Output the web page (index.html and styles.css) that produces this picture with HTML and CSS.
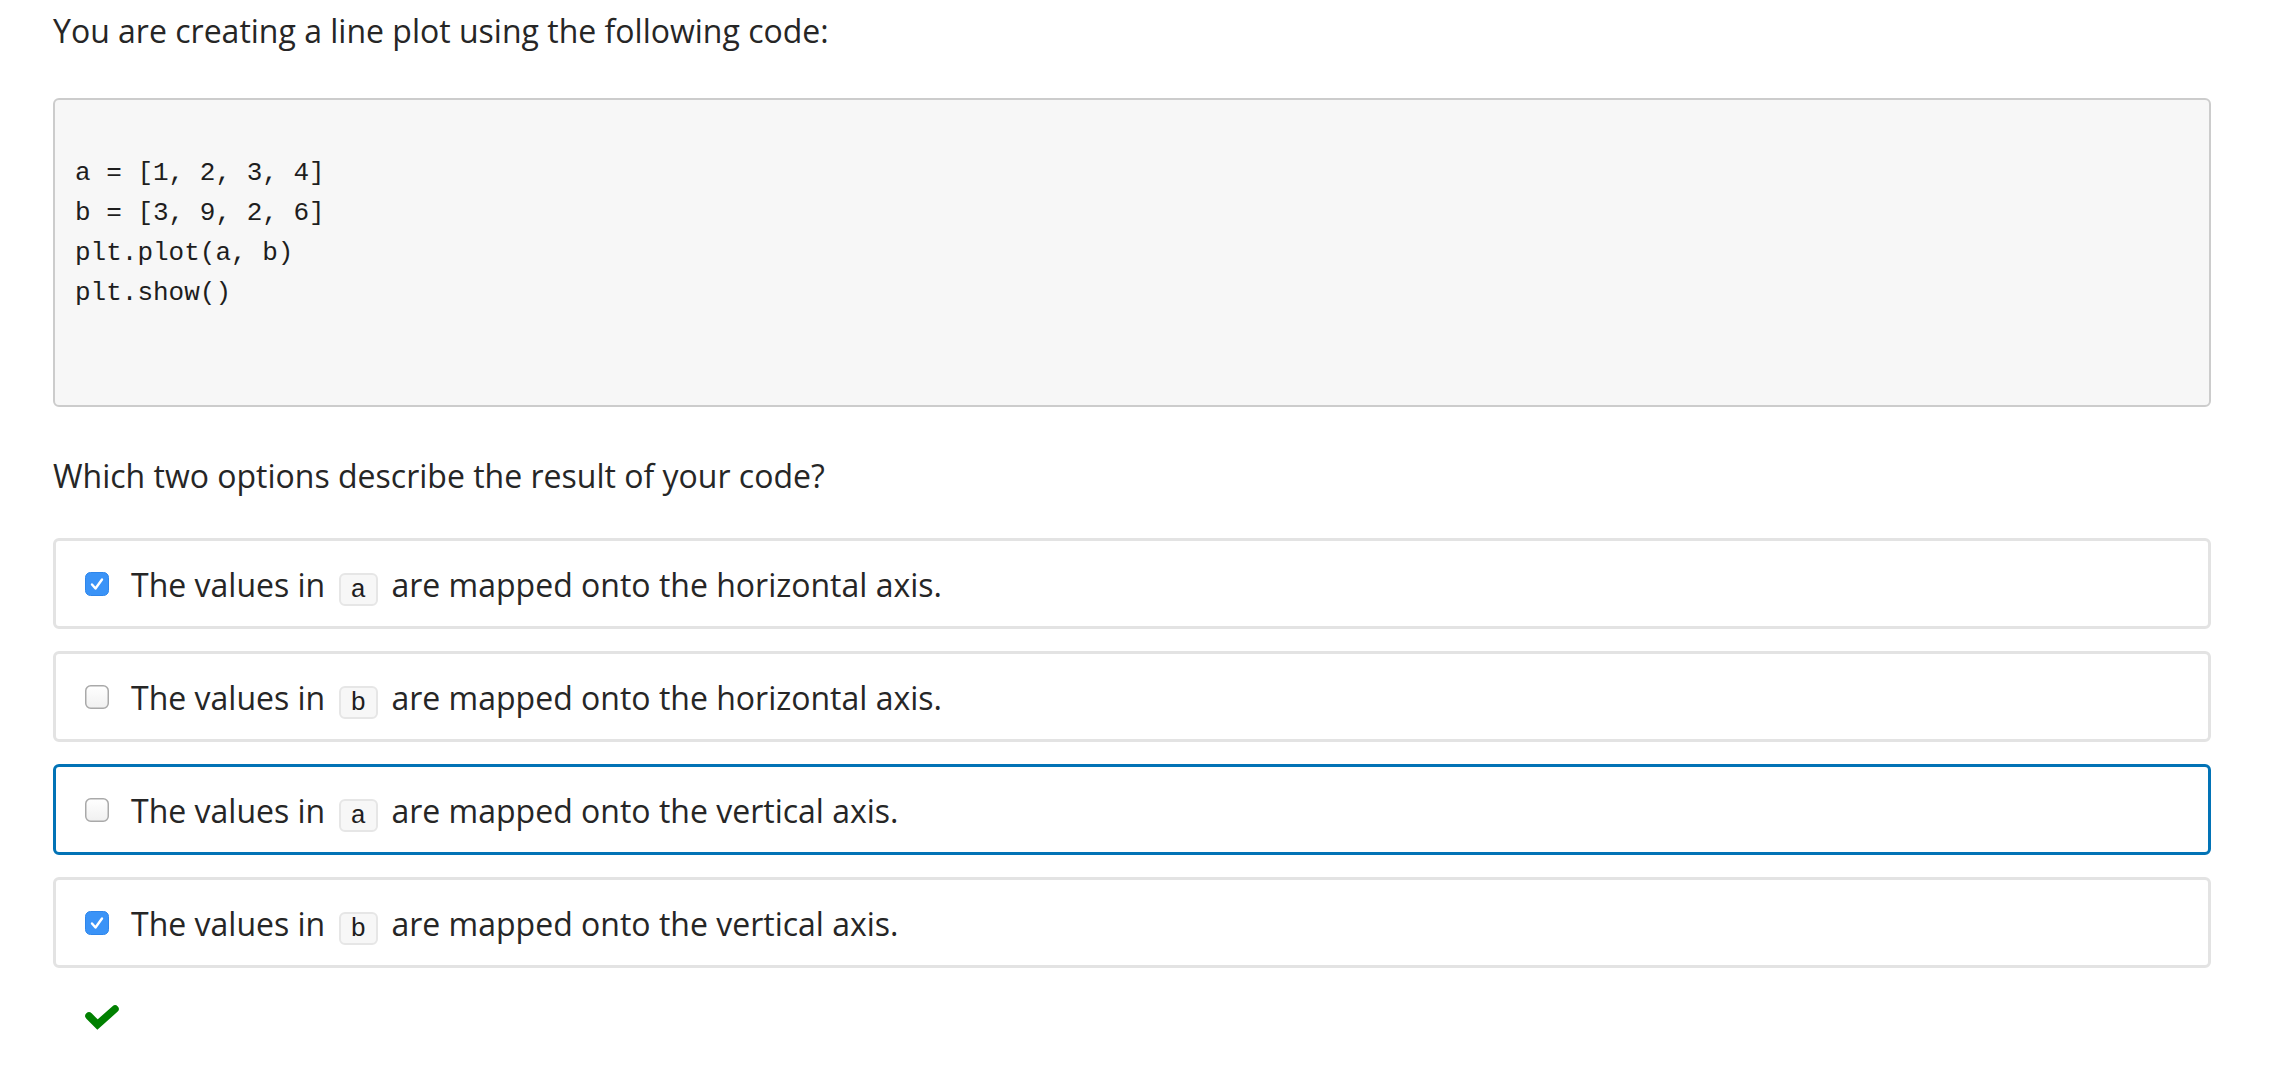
FILE: index.html
```html
<!DOCTYPE html>
<html>
<head>
<meta charset="utf-8">
<link rel="stylesheet" href="styles.css">
</head>
<body>
<div class="page">
  <p class="prompt">You are creating a line plot using the following code:</p>
  <pre class="code">a = [1, 2, 3, 4]
b = [3, 9, 2, 6]
plt.plot(a, b)
plt.show()</pre>
  <p class="question">Which two options describe the result of your code?</p>
  <div class="options">
    <label class="option">
      <svg class="cb" width="24" height="24" viewBox="0 0 24 24"><rect x="0.5" y="0.5" width="23" height="23" rx="5" fill="#3a93f7" stroke="#2f86ea"/><path d="M7 12.5 L10.5 16.5 L17 7.5" fill="none" stroke="#fff" stroke-width="2.4" stroke-linecap="round" stroke-linejoin="round"/></svg>
      <span class="txt">The values in <code class="inl">a</code> are mapped onto the horizontal axis.</span>
    </label>
    <label class="option">
      <svg class="cb" width="24" height="24" viewBox="0 0 24 24"><defs><linearGradient id="g1" x1="0" y1="0" x2="0" y2="1"><stop offset="0" stop-color="#ffffff"/><stop offset="1" stop-color="#f0f0f0"/></linearGradient></defs><rect x="0.75" y="0.75" width="22.5" height="22.5" rx="5" fill="url(#g1)" stroke="#a9a9a9" stroke-width="1.5"/></svg>
      <span class="txt">The values in <code class="inl">b</code> are mapped onto the horizontal axis.</span>
    </label>
    <label class="option focused">
      <svg class="cb" width="24" height="24" viewBox="0 0 24 24"><defs><linearGradient id="g2" x1="0" y1="0" x2="0" y2="1"><stop offset="0" stop-color="#ffffff"/><stop offset="1" stop-color="#f0f0f0"/></linearGradient></defs><rect x="0.75" y="0.75" width="22.5" height="22.5" rx="5" fill="url(#g2)" stroke="#a9a9a9" stroke-width="1.5"/></svg>
      <span class="txt">The values in <code class="inl">a</code> are mapped onto the vertical axis.</span>
    </label>
    <label class="option">
      <svg class="cb" width="24" height="24" viewBox="0 0 24 24"><rect x="0.5" y="0.5" width="23" height="23" rx="5" fill="#3a93f7" stroke="#2f86ea"/><path d="M7 12.5 L10.5 16.5 L17 7.5" fill="none" stroke="#fff" stroke-width="2.4" stroke-linecap="round" stroke-linejoin="round"/></svg>
      <span class="txt">The values in <code class="inl">b</code> are mapped onto the vertical axis.</span>
    </label>
  </div>
  <div class="result">
    <svg width="36" height="28" viewBox="0 0 36 28"><path d="M5 11 L13.5 19.5 L31 4" fill="none" stroke="#008000" stroke-width="7.5" stroke-linecap="round" stroke-linejoin="miter"/></svg>
  </div>
</div>
</body>
</html>
```

FILE: styles.css
```css
html, body {
  margin: 0;
  padding: 0;
  background: #ffffff;
}

.page {
  width: 2158px;
  padding-left: 53px;
  font-family: "Open Sans", "Noto Sans", sans-serif;
  color: #262626;
}

.prompt {
  margin: 0;
  padding-top: 9px;
  font-size: 32px;
  line-height: 44px;
}

.code {
  margin: 45px 0 0 0;
  box-sizing: border-box;
  height: 309px;
  padding: 53px 20px 0 20px;
  background: #f7f7f7;
  border: 2px solid #cccccc;
  border-radius: 6px;
  font-family: "Liberation Mono", "DejaVu Sans Mono", monospace;
  font-size: 26px;
  line-height: 40px;
  color: #1e1e1e;
}

.question {
  margin: 47px 0 0 0;
  font-size: 32px;
  line-height: 44px;
}

.options {
  margin-top: 40px;
  display: flex;
  flex-direction: column;
  gap: 22px;
}

.option {
  display: flex;
  align-items: center;
  height: 91px;
  box-sizing: border-box;
  border: 3px solid #e3e3e3;
  border-radius: 6px;
  padding-left: 29px;
  padding-top: 2px;
  background: #ffffff;
}

.option.focused {
  border-color: #0273b6;
}

.cb {
  flex: none;
  display: block;
  margin-top: -2px;
}

.txt {
  margin-left: 22px;
  font-size: 32px;
  line-height: 44px;
  white-space: nowrap;
}

.inl {
  display: inline-block;
  margin: 0 5px;
  padding: 0 10px;
  height: 33px;
  box-sizing: border-box;
  border: 2px solid #e6e6e6;
  border-radius: 6px;
  background: #f7f7f7;
  font-family: "Liberation Mono", "DejaVu Sans Mono", monospace;
  font-size: 26px;
  line-height: 30px;
  vertical-align: baseline;
  color: #1e1e1e;
}

.result {
  margin-top: 37px;
  padding-left: 31px;
}

.result svg {
  display: block;
}
```
